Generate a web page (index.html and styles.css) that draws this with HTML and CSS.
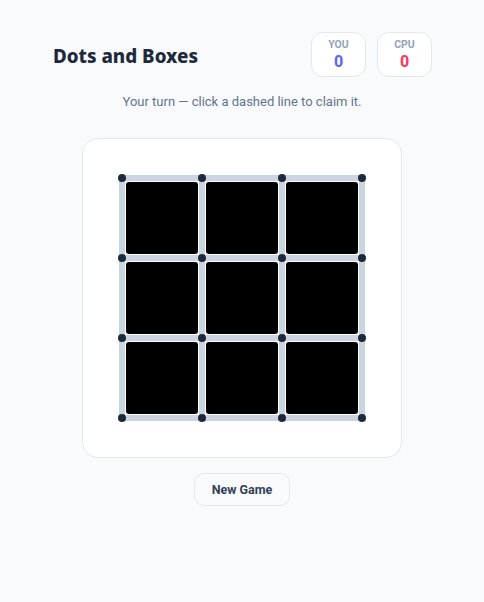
FILE: index.html
```html
<!DOCTYPE html>
<html lang="en">
<head>
<meta charset="utf-8">
<title>Dots and Boxes</title>
<link rel="stylesheet" href="styles.css">
</head>
<body>
<main class="app">
  <header class="header">
    <h1 class="title">Dots and Boxes</h1>
    <div class="scores">
      <div class="score">
        <span class="score-label">YOU</span>
        <span class="score-value you">0</span>
      </div>
      <div class="score">
        <span class="score-label">CPU</span>
        <span class="score-value cpu">0</span>
      </div>
    </div>
  </header>
  <p class="status">Your turn — click a dashed line to claim it.</p>
  <section class="board">
    <svg class="grid" width="256" height="256" viewBox="0 0 256 256" xmlns="http://www.w3.org/2000/svg">
      <g class="lines" stroke="#cbd5e1" stroke-width="6">
        <line x1="8" y1="8" x2="248" y2="8"/>
        <line x1="8" y1="88" x2="248" y2="88"/>
        <line x1="8" y1="168" x2="248" y2="168"/>
        <line x1="8" y1="248" x2="248" y2="248"/>
        <line x1="8" y1="8" x2="8" y2="248"/>
        <line x1="88" y1="8" x2="88" y2="248"/>
        <line x1="168" y1="8" x2="168" y2="248"/>
        <line x1="248" y1="8" x2="248" y2="248"/>
      </g>
      <g class="boxes" fill="#000">
        <rect x="12" y="12" width="72" height="72" rx="3"/>
        <rect x="92" y="12" width="72" height="72" rx="3"/>
        <rect x="172" y="12" width="72" height="72" rx="3"/>
        <rect x="12" y="92" width="72" height="72" rx="3"/>
        <rect x="92" y="92" width="72" height="72" rx="3"/>
        <rect x="172" y="92" width="72" height="72" rx="3"/>
        <rect x="12" y="172" width="72" height="72" rx="3"/>
        <rect x="92" y="172" width="72" height="72" rx="3"/>
        <rect x="172" y="172" width="72" height="72" rx="3"/>
      </g>
      <g class="dots" fill="#1e293b">
        <circle cx="8" cy="8" r="4"/><circle cx="88" cy="8" r="4"/><circle cx="168" cy="8" r="4"/><circle cx="248" cy="8" r="4"/>
        <circle cx="8" cy="88" r="4"/><circle cx="88" cy="88" r="4"/><circle cx="168" cy="88" r="4"/><circle cx="248" cy="88" r="4"/>
        <circle cx="8" cy="168" r="4"/><circle cx="88" cy="168" r="4"/><circle cx="168" cy="168" r="4"/><circle cx="248" cy="168" r="4"/>
        <circle cx="8" cy="248" r="4"/><circle cx="88" cy="248" r="4"/><circle cx="168" cy="248" r="4"/><circle cx="248" cy="248" r="4"/>
      </g>
    </svg>
  </section>
  <div class="actions">
    <button class="btn" type="button">New Game</button>
  </div>
</main>
</body>
</html>
```

FILE: styles.css
```css
* { box-sizing: border-box; }

html, body {
  margin: 0;
  background: #f8fafc;
}

body {
  font-family: Roboto, "Noto Sans", "Liberation Sans", sans-serif;
  color: #1e293b;
}

.app {
  width: 380px;
  margin: 0 auto;
  padding-top: 32px;
  display: flex;
  flex-direction: column;
  align-items: center;
}

.header {
  width: 100%;
  display: flex;
  justify-content: space-between;
  align-items: center;
}

.title {
  margin: 3px 0 0 1px;
  font-family: "Noto Sans", "Open Sans", sans-serif;
  font-size: 18.8px;
  font-weight: 800;
  color: #1e293b;
  line-height: 24px;
}

.scores {
  display: flex;
  gap: 11px;
}

.score {
  width: 55px;
  height: 45px;
  border: 1px solid #e2e8f0;
  border-radius: 12px;
  background: #fff;
  display: flex;
  flex-direction: column;
  align-items: center;
  justify-content: center;
}

.score-label {
  font-size: 10.5px;
  font-weight: 700;
  color: #94a3b8;
  line-height: 13px;
}

.score-value {
  font-size: 16px;
  font-weight: 800;
  line-height: 21px;
}

.score-value.you { color: #6366f1; }
.score-value.cpu { color: #f43f5e; }

.status {
  margin: 15px 0 0;
  font-size: 13px;
  line-height: 20px;
  color: #64748b;
  text-align: center;
}

.board {
  margin-top: 26px;
  width: 320px;
  height: 320px;
  padding: 31px;
  background: #fff;
  border: 1px solid #e2e8f0;
  border-radius: 16px;
}

.grid { display: block; }

.actions {
  margin-top: 15px;
}

.btn {
  font-family: inherit;
  font-size: 12.5px;
  font-weight: 700;
  color: #334155;
  background: #f8fafc;
  border: 1px solid #e2e8f0;
  border-radius: 10px;
  height: 33px;
  width: 96px;
  padding: 0;
  cursor: pointer;
}
```
